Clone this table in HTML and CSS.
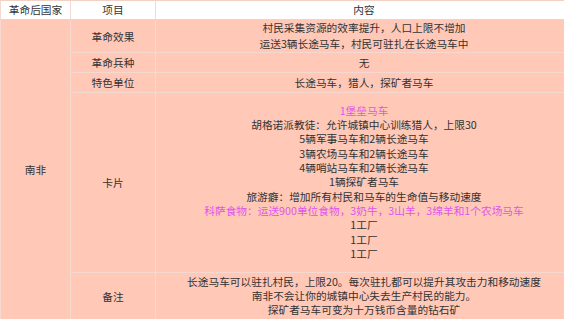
FILE: index.html
```html
<!DOCTYPE html>
<html lang="zh">
<head>
<meta charset="utf-8">
<link rel="stylesheet" href="styles.css">
</head>
<body>
<table class="civ">
  <colgroup>
    <col class="c1">
    <col class="c2">
    <col class="c3">
  </colgroup>
  <thead>
    <tr class="head">
      <th>革命后国家</th>
      <th>项目</th>
      <th>内容</th>
    </tr>
  </thead>
  <tbody>
    <tr class="r-effect">
      <td rowspan="5" class="nation">南非</td>
      <td>革命效果</td>
      <td class="multi">村民采集资源的效率提升，人口上限不增加<br>运送3辆长途马车，村民可驻扎在长途马车中</td>
    </tr>
    <tr class="r-small">
      <td>革命兵种</td>
      <td>无</td>
    </tr>
    <tr class="r-small">
      <td>特色单位</td>
      <td>长途马车，猎人，探矿者马车</td>
    </tr>
    <tr class="r-cards">
      <td>卡片</td>
      <td class="cards">
        <span class="hl">1堡垒马车</span><br>
        胡格诺派教徒：允许城镇中心训练猎人，上限30<br>
        5辆军事马车和2辆长途马车<br>
        3辆农场马车和2辆长途马车<br>
        4辆哨站马车和2辆长途马车<br>
        1辆探矿者马车<br>
        旅游癖：增加所有村民和马车的生命值与移动速度<br>
        <span class="hl">科萨食物：运送900单位食物，3奶牛，3山羊，3绵羊和1个农场马车</span><br>
        1工厂<br>
        1工厂<br>
        1工厂
      </td>
    </tr>
    <tr class="r-notes">
      <td>备注</td>
      <td class="notes">长途马车可以驻扎村民，上限20。每次驻扎都可以提升其攻击力和移动速度<br>南非不会让你的城镇中心失去生产村民的能力。<br>探矿者马车可变为十万钱币含量的钻石矿</td>
    </tr>
  </tbody>
</table>
</body>
</html>
```

FILE: styles.css
```css
html, body {
  margin: 0;
  padding: 0;
  overflow: hidden;
  background: #ffffff;
}

.civ {
  border-collapse: collapse;
  table-layout: fixed;
  width: 572px;
  font-family: "Noto Sans CJK SC", "Noto Sans", sans-serif;
  font-size: 10.7px;
  color: #333333;
  text-align: center;
  border-left: 1px solid #e9e4e1;
}

.c1 { width: 70px; }
.c2 { width: 85px; }
.c3 { width: 417px; }

.civ th,
.civ td {
  padding: 0;
  border: 1px solid #f5d9d0;
  vertical-align: middle;
  font-weight: normal;
}

.head th {
  background: #ffffff;
  height: 18px;
  line-height: 18px;
  border-top: 1px solid #f3cfc4;
  border-bottom: 1px solid #f3cfc4;
}

.civ td {
  background: #ffc8b7;
}

.r-effect td {
  height: 32px;
}

.multi {
  line-height: 16px;
  padding-top: 1px;
}

.r-small td {
  height: 19px;
  line-height: 14px;
}

.r-cards td {
  height: 179px;
}

.cards {
  line-height: 14.3px;
  padding-top: 8px;
}

.hl {
  color: #e055ee;
}

.r-notes td {
  height: 46px;
}

.notes {
  line-height: 14px;
}

.nation {
  padding-top: 2px;
}
```
